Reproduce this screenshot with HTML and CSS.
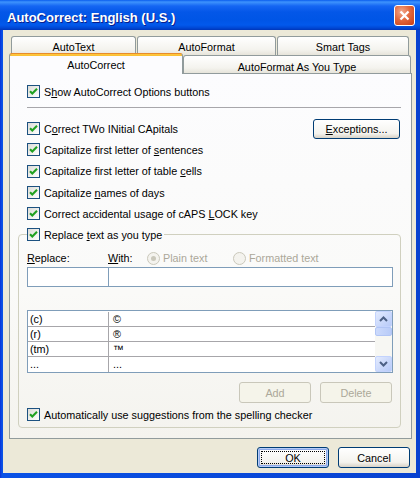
FILE: index.html
```html
<!DOCTYPE html>
<html lang="en">
<head>
<meta charset="utf-8">
<title>AutoCorrect: English (U.S.)</title>
<link rel="stylesheet" href="styles.css">
</head>
<body>
<div class="window">
  <div class="titlebar">
    <span class="title">AutoCorrect: English (U.S.)</span>
    <span class="close"><svg width="13" height="13" viewBox="0 0 13 13"><path d="M2.5 2.5 L10.5 10.5 M10.5 2.5 L2.5 10.5"/></svg></span>
  </div>
  <div class="client">
    <div class="tabs">
      <div class="tabrow back">
        <div class="tab w1">AutoText</div>
        <div class="tab w2">AutoFormat</div>
        <div class="tab w3">Smart Tags</div>
      </div>
      <div class="tabrow front">
        <div class="tab sel">AutoCorrect</div>
        <div class="tab w5">AutoFormat As You Type</div>
      </div>
    </div>
    <div class="panel">
      <div class="chk first"><span class="box"><svg viewBox="0 0 11 11"><path d="M2 5.2 L4.3 7.5 L9 2.8"/></svg></span><span>S<u>h</u>ow AutoCorrect Options buttons</span></div>
      <div class="sep"></div>
      <div class="rows">
        <div class="row"><div class="chk"><span class="box"><svg viewBox="0 0 11 11"><path d="M2 5.2 L4.3 7.5 L9 2.8"/></svg></span><span>C<u>o</u>rrect TWo INitial CApitals</span></div><button class="btn exc"><u>E</u>xceptions...</button></div>
        <div class="row"><div class="chk"><span class="box"><svg viewBox="0 0 11 11"><path d="M2 5.2 L4.3 7.5 L9 2.8"/></svg></span><span>Capitalize first letter of <u>s</u>entences</span></div></div>
        <div class="row tall"><div class="chk"><span class="box"><svg viewBox="0 0 11 11"><path d="M2 5.2 L4.3 7.5 L9 2.8"/></svg></span><span>Capitalize first letter of table <u>c</u>ells</span></div></div>
        <div class="row"><div class="chk"><span class="box"><svg viewBox="0 0 11 11"><path d="M2 5.2 L4.3 7.5 L9 2.8"/></svg></span><span>Capitalize <u>n</u>ames of days</span></div></div>
        <div class="row"><div class="chk"><span class="box"><svg viewBox="0 0 11 11"><path d="M2 5.2 L4.3 7.5 L9 2.8"/></svg></span><span>Correct accidental usage of cAPS <u>L</u>OCK key</span></div></div>
      </div>
      <fieldset class="group">
        <legend><span class="chk leg"><span class="box"><svg viewBox="0 0 11 11"><path d="M2 5.2 L4.3 7.5 L9 2.8"/></svg></span><span>Replace <u>t</u>ext as you type</span></span></legend>
        <div class="labels">
          <span class="lbl-r"><u>R</u>eplace:</span>
          <span class="lbl-w"><u>W</u>ith:</span>
          <span class="rg rg1"><span class="radio on"></span>Plain text</span>
          <span class="rg"><span class="radio"></span>Formatted text</span>
        </div>
        <div class="fields"><div class="f1"></div><div class="f2"></div></div>
        <div class="list">
          <div class="lrows">
            <div class="lrow"><span class="c1">(c)</span><span class="c2">©</span></div>
            <div class="lrow"><span class="c1">(r)</span><span class="c2">®</span></div>
            <div class="lrow"><span class="c1">(tm)</span><span class="c2">™</span></div>
            <div class="lrow last"><span class="c1">...</span><span class="c2">...</span></div>
          </div>
          <div class="sb">
            <div class="sbbtn"><svg width="9" height="6" viewBox="0 0 9 6"><path d="M1 5 L4.5 1.5 L8 5"/></svg></div>
            <div class="thumb"></div>
            <div class="track"></div>
            <div class="sbbtn"><svg width="9" height="6" viewBox="0 0 9 6"><path d="M1 1 L4.5 4.5 L8 1"/></svg></div>
          </div>
        </div>
        <div class="listbtns"><button class="btn dis">Add</button><button class="btn dis">Delete</button></div>
        <div class="chk auto"><span class="box"><svg viewBox="0 0 11 11"><path d="M2 5.2 L4.3 7.5 L9 2.8"/></svg></span><span>Automatically use suggestions from the spelling checker</span></div>
      </fieldset>
    </div>
    <div class="buttons"><button class="btn default"><span class="focus">OK</span></button><button class="btn">Cancel</button></div>
  </div>
</div>
</body>
</html>
```
FILE: styles.css
```css
* { box-sizing: border-box; }
html, body { margin: 0; padding: 0; }
body {
  width: 420px; height: 478px; overflow: hidden;
  background: #ffffff;
  font-family: "Liberation Sans", Arial, sans-serif;
  font-size: 10.8px; color: #000;
}
.window {
  width: 420px; height: 478px;
  display: flex; flex-direction: column;
  background: linear-gradient(to right, #0831D9 0, #0A52E6 2px, #0842D0 100%);
}
.titlebar {
  flex: none; height: 30px;
  display: flex; align-items: center;
  padding: 0 5px 0 7px;
  background: linear-gradient(to bottom, #0A5DEE 0, #3E93FD 2px, #1566F3 6px, #0457E8 12px, #0055E6 20px, #0259EC 25px, #0047D4 28px, #0036B8 30px);
}
.title {
  flex: 1; padding-top: 4px;
  font-weight: bold; font-size: 13px; color: #fff;
  text-shadow: 1px 1px 0 #0A1E8C;
}
.close {
  width: 21px; height: 21px; margin-top: 1px;
  border: 1px solid #fff; border-radius: 3px;
  background: radial-gradient(circle at 35% 30%, #F3A98D 0%, #E2693F 45%, #C73C14 100%);
  display: flex; align-items: center; justify-content: center;
}
.close path { stroke: #fff; stroke-width: 2.3; fill: none; }
.client {
  flex: 1; margin: 0 4px 5px 3px;
  background: #ECE9D8;
  padding: 6px 4px 0 6px;
  display: flex; flex-direction: column;
}
/* tabs */
.tabs { flex: none; height: 37px; display: flex; flex-direction: column; }
.tabrow { display: flex; }
.back { height: 17px; padding-left: 2px; gap: 1px; }
.front { height: 20px; align-items: flex-end; }
.tab {
  flex: none;
  border: 1px solid #919B9C; border-bottom: none;
  border-radius: 3px 3px 0 0;
  background: linear-gradient(#FFFFFF, #F4F3EE 70%, #E6E4DA);
  text-align: center; line-height: 14px; white-space: nowrap;
}
.back .tab { height: 19px; padding-top: 3px; }
.w1 { width: 125px; }
.w2 { width: 139px; }
.w3 { width: 132px; }
.sel {
  width: 174px; height: 21px; margin-bottom: -1px;
  position: relative; z-index: 1;
  border-color: #E68B2C #919B9C;
  background: linear-gradient(to bottom, #FFC83C 0, #F9BE34 2px, #FCFCFE 2px);
  padding-top: 4px;
}
.w5 { width: 228px; height: 18px; padding-top: 4px; }
/* panel */
.panel {
  flex: none;
  border: 1px solid #919B9C;
  background: linear-gradient(#FCFCFE 0%, #FAFAF8 60%, #F4F3EE 100%);
  padding: 7px 10px 10px 8px;
  display: flex; flex-direction: column;
}
.chk { display: flex; align-items: center; height: 21px; white-space: nowrap; }
.box {
  width: 13px; height: 13px; flex: none;
  border: 1px solid #1C5180;
  background: linear-gradient(135deg, #DCDCD7, #FFFFFF);
  margin-right: 4px;
  display: flex; align-items: center; justify-content: center;
}
.box svg { width: 11px; height: 11px; display: block; }
.box path { fill: none; stroke: #21A121; stroke-width: 2.1; }
.first { padding-left: 9px; }
.sep { height: 1px; background: #A7A6AA; margin: 5px 0 0 9px; }
.rows { margin-top: 10px; padding-left: 9px; }
.row { display: flex; align-items: center; height: 21px; }
.row.tall { height: 22px; }
.btn {
  font-family: "Liberation Sans", Arial, sans-serif; font-size: 10.8px; color: #000;
  width: 72px; height: 21px; padding: 0;
  border: 1px solid #003C74; border-radius: 3px;
  background: linear-gradient(#FFFFFF, #F4F3EE 75%, #D8D2C6);
}
.exc { margin-left: auto; margin-right: 1px; width: 87px; height: 20px; }
.dis { border-color: #C9C7BA; background: #F5F4EA; color: #ACA899; }
/* group */
.group {
  margin: 4px 0 0 0; padding: 0 7px 2px 8px;
  width: 383px; min-width: 0;
  border: 1px solid #D0D0BF; border-radius: 4px;
}
.group legend { padding: 0 2px 0 0; margin: 0; }
.leg { height: 13px; }
.labels { display: flex; align-items: center; height: 14px; margin-top: 10px; white-space: nowrap; }
.lbl-r { width: 81px; }
.lbl-w { width: 39px; }
.rg { display: flex; align-items: center; color: #ACA899; }
.rg1 { width: 86px; }
.radio {
  width: 13px; height: 13px; border-radius: 50%;
  border: 1px solid #CAC8BB; background: #F4F3EE;
  margin-right: 3px;
  display: flex; align-items: center; justify-content: center;
}
.radio.on::after { content: ""; width: 5px; height: 5px; border-radius: 50%; background: #CAC8BB; }
.fields { display: flex; height: 20px; margin-top: 2px; border: 1px solid #7F9DB9; background: #fff; }
.f1 { width: 81px; border-right: 1px solid #7F9DB9; }
.f2 { flex: 1; }
.list { display: flex; height: 63px; margin-top: 23px; border: 1px solid #7F9DB9; background: #fff; }
.lrows { flex: 1; padding-top: 1px; overflow: hidden; }
.lrow { display: flex; height: 15px; line-height: 14px; border-bottom: 1px solid #A7A6AA; }
.lrow.last { border-bottom: none; }
.c1 { width: 81px; padding-left: 2px; border-right: 1px solid #A7A6AA; }
.c2 { padding-left: 4px; }
.sb { width: 17px; display: flex; flex-direction: column; background: #F7F7F3; }
.sbbtn {
  height: 16px; flex: none;
  border: 1px solid #C3D3FD; border-radius: 2px;
  background: linear-gradient(135deg, #E3EBFE, #B7CAF8);
  display: flex; align-items: center; justify-content: center;
}
.sbbtn path { fill: none; stroke: #4D6185; stroke-width: 2; }
.thumb { height: 9px; flex: none; border: 1px solid #B1C5F5; border-radius: 2px; background: linear-gradient(to right, #CCDAFC, #B8CBF8); }
.track { flex: 1; }
.listbtns { display: flex; justify-content: flex-end; gap: 9px; margin-top: 9px; padding-right: 1px; }
.auto { margin-top: 1px; }
/* bottom buttons */
.buttons { display: flex; justify-content: flex-end; gap: 9px; margin-top: 8px; padding-right: 2px; }
.default {
  display: flex; padding: 3px;
  box-shadow: inset 0 0 0 1px #B6CCF7, inset 0 0 0 2px #8CA9EA;
}
.focus {
  flex: 1; border: 1px dotted #000;
  display: flex; align-items: center; justify-content: center;
}
```
